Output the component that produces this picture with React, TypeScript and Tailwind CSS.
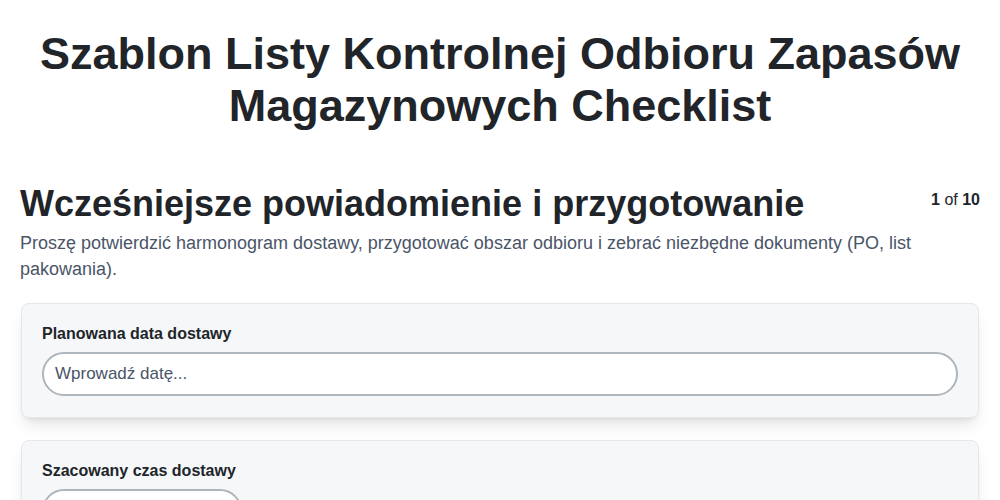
const fields = [
  { label: "Planowana data dostawy", placeholder: "Wprowadź datę...", wide: true },
  { label: "Szacowany czas dostawy", placeholder: "", wide: false },
];

const App = () => {
  return (
    <div className="min-h-screen bg-white px-5 pt-7 font-['Liberation_Sans',Arial,sans-serif] text-[#212529]">
      <h1 className="text-center text-[45px] font-bold leading-[52px]">
        Szablon Listy Kontrolnej Odbioru Zapasów Magazynowych Checklist
      </h1>

      <div className="mt-[50px] flex items-start justify-between">
        <h2 className="text-[36px] font-bold leading-[44px]">
          Wcześniejsze powiadomienie i przygotowanie
        </h2>
        <span className="mt-1.5 text-base">
          <b>1</b> of <b>10</b>
        </span>
      </div>
      <p className="mt-1 text-lg leading-[26px] text-[#4a5568]">
        Proszę potwierdzić harmonogram dostawy, przygotować obszar odbioru i zebrać niezbędne dokumenty (PO, list
        pakowania).
      </p>

      <div className="mt-[21px] flex flex-col gap-[22px] px-px">
        {fields.map((f) => (
          <div
            key={f.label}
            className="rounded-lg border border-[#e5e7eb] bg-[#f6f7f9] px-5 pt-[18px] pb-[21px] shadow-lg"
          >
            <label className="block text-base font-bold leading-6">{f.label}</label>
            <input
              type="text"
              placeholder={f.placeholder}
              className={`mt-1.5 h-[44px] rounded-full border-2 border-[#adb5bd] bg-white pl-[11px] pr-3 text-[17px] text-[#212529] placeholder:text-[#4a5568] ${
                f.wide ? "w-full" : "w-[200px]"
              }`}
            />
          </div>
        ))}
      </div>
    </div>
  );
};

export default App;
